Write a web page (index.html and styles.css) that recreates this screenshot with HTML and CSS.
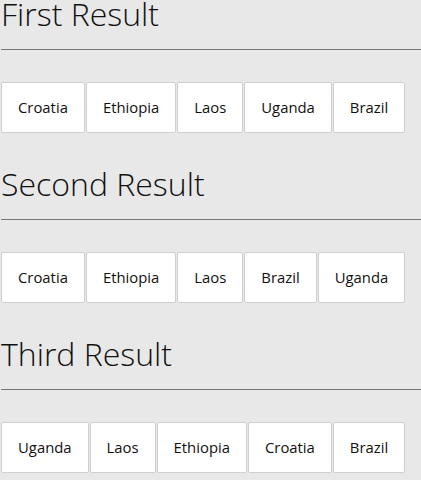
FILE: index.html
```html
<!DOCTYPE html>
<html>
<head>
<meta charset="utf-8">
<link rel="stylesheet" href="styles.css">
</head>
<body>
<div class="page">
  <section class="result">
    <h1 class="title">First Result</h1>
    <div class="rule"></div>
    <div class="chips">
      <div class="chip">Croatia</div>
      <div class="chip">Ethiopia</div>
      <div class="chip">Laos</div>
      <div class="chip">Uganda</div>
      <div class="chip">Brazil</div>
    </div>
  </section>
  <section class="result">
    <h1 class="title">Second Result</h1>
    <div class="rule"></div>
    <div class="chips">
      <div class="chip">Croatia</div>
      <div class="chip">Ethiopia</div>
      <div class="chip">Laos</div>
      <div class="chip">Brazil</div>
      <div class="chip">Uganda</div>
    </div>
  </section>
  <section class="result">
    <h1 class="title">Third Result</h1>
    <div class="rule"></div>
    <div class="chips">
      <div class="chip">Uganda</div>
      <div class="chip">Laos</div>
      <div class="chip">Ethiopia</div>
      <div class="chip">Croatia</div>
      <div class="chip">Brazil</div>
    </div>
  </section>
</div>
</body>
</html>
```
FILE: styles.css
```css
html, body {
  margin: 0;
  padding: 0;
  background: #e8e8e8;
}
body {
  font-family: "Open Sans", "DejaVu Sans", sans-serif;
  color: #111;
}
.page {
  display: flex;
  flex-direction: column;
  gap: 37px;
  padding: 0 0 0 1px;
}
.result {
  display: flex;
  flex-direction: column;
}
.title {
  margin: 0;
  font-size: 32px;
  font-weight: 300;
  line-height: 28px;
  color: #111;
}
.rule {
  margin-top: 21px;
  border-top: 1px solid #777;
}
.chips {
  display: flex;
  gap: 1px;
  margin-top: 32px;
}
.chip {
  background: #fff;
  border: 1px solid #cfcfcf;
  border-radius: 2px;
  padding: 16px 16px;
  font-size: 14.85px;
  line-height: 17px;
  color: #111;
}
```
